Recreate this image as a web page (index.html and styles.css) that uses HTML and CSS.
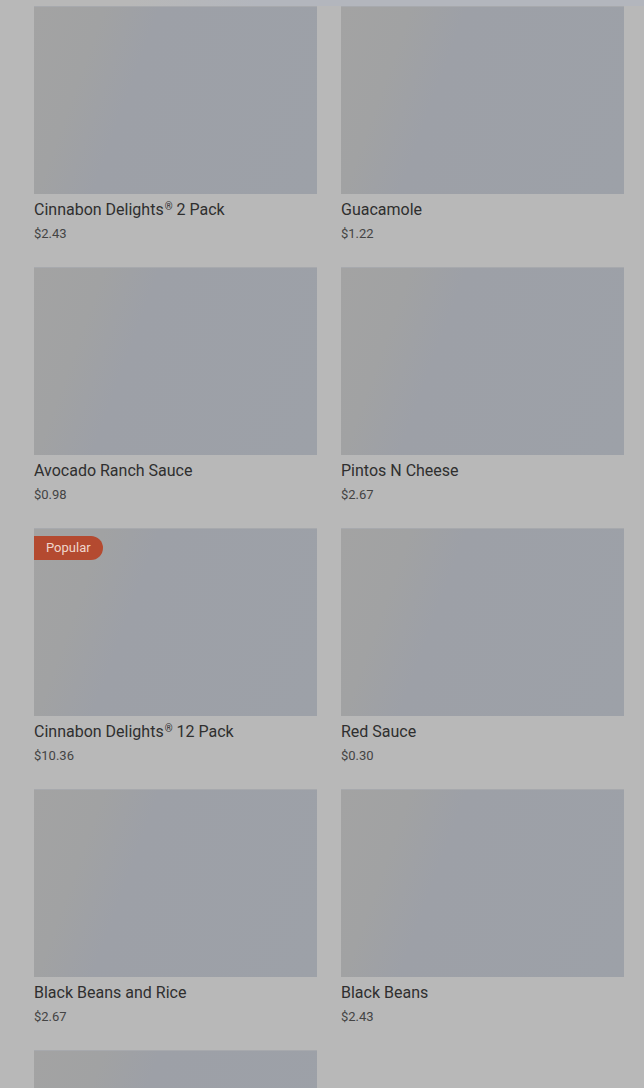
FILE: index.html
```html
<!DOCTYPE html>
<html lang="en">
<head>
    <meta charset="UTF-8">
    <meta name="viewport" content="width=device-width, initial-scale=1.0">
    <title>Menu</title>
    <link rel="stylesheet" href="styles.css">
</head>
<body>
    <div class="top-strip"></div>
    <div class="menu-grid">
        <div class="item">
            <div class="item-image"></div>
            <p class="item-name">Cinnabon Delights<span class="reg">®</span> 2 Pack</p>
            <p class="item-price">$2.43</p>
        </div>
        <div class="item">
            <div class="item-image"></div>
            <p class="item-name">Guacamole</p>
            <p class="item-price">$1.22</p>
        </div>
        <div class="item">
            <div class="item-image"></div>
            <p class="item-name">Avocado Ranch Sauce</p>
            <p class="item-price">$0.98</p>
        </div>
        <div class="item">
            <div class="item-image"></div>
            <p class="item-name">Pintos N Cheese</p>
            <p class="item-price">$2.67</p>
        </div>
        <div class="item">
            <div class="item-image">
                <span class="badge">Popular</span>
            </div>
            <p class="item-name">Cinnabon Delights<span class="reg">®</span> 12 Pack</p>
            <p class="item-price">$10.36</p>
        </div>
        <div class="item">
            <div class="item-image"></div>
            <p class="item-name">Red Sauce</p>
            <p class="item-price">$0.30</p>
        </div>
        <div class="item">
            <div class="item-image"></div>
            <p class="item-name">Black Beans and Rice</p>
            <p class="item-price">$2.67</p>
        </div>
        <div class="item">
            <div class="item-image"></div>
            <p class="item-name">Black Beans</p>
            <p class="item-price">$2.43</p>
        </div>
        <div class="item">
            <div class="item-image"></div>
        </div>
    </div>
</body>
</html>
```

FILE: styles.css
```css
/* Basic Reset */
* {
    box-sizing: border-box;
    margin: 0;
    padding: 0;
}

body {
    font-family: Roboto, "Noto Sans", sans-serif;
    background-color: #b8b8b8;
    height: 1088px;
    overflow: hidden;
}

.top-strip {
    height: 6px;
    background: linear-gradient(to right, #b8b8b8 20%, #b3b6bd 40%, #b3b6bd 100%);
}

.menu-grid {
    display: grid;
    grid-template-columns: 283px 283px;
    column-gap: 24px;
    row-gap: 24px;
    padding-left: 34px;
}

.item-image {
    position: relative;
    height: 188px;
    border-top: 1px solid #a7a9ad;
    background: linear-gradient(110deg, #a3a3a3 0%, #a1a2a3 20%, #9da0a7 36%, #9da1a8 100%);
}

.badge {
    position: absolute;
    top: 7px;
    left: 0;
    height: 24px;
    line-height: 24px;
    padding: 0 12px;
    background-color: #b44a30;
    color: #efd6cc;
    font-size: 13px;
    border-radius: 0 12px 12px 0;
}

.item-name {
    margin-top: 6px;
    font-size: 16px;
    line-height: 20px;
    color: #2f2f2f;
}

.reg {
    font-size: 10px;
    line-height: 0;
    vertical-align: 5px;
    margin-left: 1px;
}

.item-price {
    margin-top: 5px;
    font-size: 13px;
    line-height: 18px;
    color: #444;
}
```
